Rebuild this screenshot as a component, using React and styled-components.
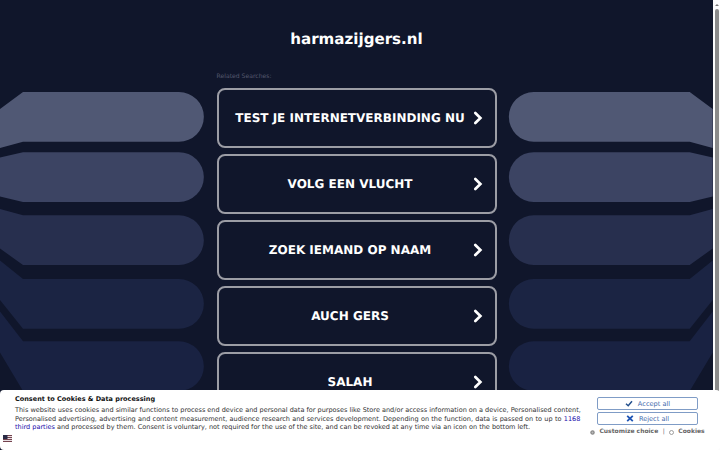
import React from "react";
import styled, { createGlobalStyle } from "styled-components";

const GlobalStyle = createGlobalStyle`
  html, body { margin: 0; height: 100%; overflow: hidden; background: #10162b; }
  * { box-sizing: border-box; }
`;

const Page = styled.div`
  position: relative;
  display: flex;
  width: 720px;
  height: 450px;
  overflow: hidden;
  background: #10162b;
  font-family: "DejaVu Sans", sans-serif;
  text-rendering: geometricPrecision;
`;

const Backdrop = styled.svg`
  position: absolute;
  inset: 0;
  width: 713px;
  height: 450px;
`;

const Content = styled.main`
  position: relative;
  width: 713px;
  height: 450px;
  display: flex;
  flex-direction: column;
  align-items: center;
  padding-top: 28px;
`;

const Title = styled.h1`
  margin: 0;
  height: 22px;
  line-height: 22px;
  font-size: 15.1px;
  font-weight: 700;
  color: #fff;
  white-space: nowrap;
`;

const Related = styled.section`
  width: 280px;
  margin-top: 21px;
  display: flex;
  flex-direction: column;
  gap: 6px;
`;

const RelatedLabel = styled.div`
  height: 11px;
  line-height: 11px;
  font-size: 6.1px;
  color: #55586e;
`;

const LinkCard = styled.a`
  display: flex;
  align-items: center;
  height: 60px;
  flex: none;
  padding: 0 12px 0 9px;
  border: 2px solid #9c9da5;
  border-radius: 8px;
  color: #fff;
`;

const LinkText = styled.span`
  flex: 1;
  text-align: center;
  font-size: 12px;
  font-weight: 700;
  line-height: 16px;
  white-space: nowrap;
`;

const Chevron = styled.svg`
  width: 10px;
  height: 14px;
  flex: none;
`;

const Scrollbar = styled.div`
  width: 7px;
  height: 450px;
  display: flex;
  flex-direction: column;
  align-items: center;
  background: #fcfcfc;
  position: relative;
`;

const ScrollArrow = styled.svg`
  width: 4px;
  height: 2px;
  margin: 4px 0 3px;
  flex: none;
`;

const ScrollThumb = styled.div`
  width: 4px;
  height: 384px;
  border-radius: 2px;
  background: #8b8b8b;
`;

const Banner = styled.aside`
  position: absolute;
  left: 0;
  bottom: 0;
  width: 720px;
  height: 60px;
  display: flex;
  background: #fff;
  border-radius: 4px;
  color: #333;
`;

const BannerText = styled.div`
  width: 597px;
  padding: 5px 0 0 15px;
  white-space: nowrap;
`;

const BannerTitle = styled.h2`
  margin: 0 0 2px;
  height: 9px;
  font-size: 6.5px;
  line-height: 9px;
  color: #111;
`;

const BannerLine = styled.p`
  margin: 0;
  height: 8.6px;
  font-size: 6.52px;
  line-height: 8.6px;
  word-spacing: ${({ $spread }) => $spread || "0"};
`;

const PartnerLink = styled.a`
  color: #1a0dab;
`;

const Actions = styled.div`
  width: 101px;
  padding-top: 7px;
  display: flex;
  flex-direction: column;
  align-items: center;
  gap: 2px;
`;

const ActionButton = styled.button`
  display: flex;
  align-items: center;
  justify-content: center;
  gap: 5px;
  width: 101px;
  height: 13px;
  flex: none;
  padding: 0;
  border: 1px solid #7f9cc6;
  border-radius: 2px;
  background: #fff;
  color: #3f6bac;
  font: 6.6px/10px "DejaVu Sans", sans-serif;
  white-space: nowrap;
`;

const ActionIcon = styled.svg`
  width: 8px;
  height: 7px;
`;

const Options = styled.div`
  display: flex;
  align-items: center;
  height: 10px;
  font-size: 6px;
  font-weight: 700;
  line-height: 10px;
  color: #666;
  white-space: nowrap;
`;

const OptionIcon = styled.svg`
  width: 5px;
  height: 5px;
  margin-right: 4px;
`;

const Divider = styled.span`
  margin: 0 4.5px;
  font-weight: 400;
`;

const Flag = styled.svg`
  position: absolute;
  left: 3px;
  top: 45px;
  width: 9px;
  height: 7px;
`;

const searches = [
  "TEST JE INTERNETVERBINDING NU",
  "VOLG EEN VLUCHT",
  "ZOEK IEMAND OP NAAM",
  "AUCH GERS",
  "SALAH",
];

const bands = [
  { top: 92, edgeTop: 109, edgeBottom: 148, fill: "#505874" },
  { top: 152.2, edgeTop: 157.5, edgeBottom: 196.5, fill: "#3c4463" },
  { top: 215.3, edgeTop: 209, edgeBottom: 248.5, fill: "#272f4e" },
  { top: 279, edgeTop: 260.5, edgeBottom: 300, fill: "#1b2443" },
  { top: 341.3, edgeTop: 311.5, edgeBottom: 352.5, fill: "#192242" },
];

function Bands() {
  return bands.map(({ top, edgeTop, edgeBottom, fill }) => (
    <path
      key={top}
      fill={fill}
      d={`M0 ${edgeTop}L23 ${top}H179a24.8 24.8 0 0 1 0 49.7H23L0 ${edgeBottom}Z`}
    />
  ));
}

export default function App() {
  return (
    <Page>
      <GlobalStyle />
      <Backdrop viewBox="0 0 713 450">
        <Bands />
        <g transform="translate(712.7 0) scale(-1 1)">
          <Bands />
        </g>
      </Backdrop>
      <Content>
        <Title>harmazijgers.nl</Title>
        <Related>
          <RelatedLabel>Related Searches:</RelatedLabel>
          {searches.map((label) => (
            <LinkCard key={label}>
              <LinkText>{label}</LinkText>
              <Chevron viewBox="0 0 10 14">
                <path d="M2.3 2 7.4 7 2.3 12" fill="none" stroke="#fff" strokeWidth="2.7" strokeLinecap="round" />
              </Chevron>
            </LinkCard>
          ))}
        </Related>
      </Content>
      <Scrollbar>
        <ScrollArrow viewBox="0 0 4 2">
          <path d="M0 2 2 0 4 2Z" fill="#777" />
        </ScrollArrow>
        <ScrollThumb />
      </Scrollbar>
      <Banner>
        <BannerText>
          <BannerTitle>Consent to Cookies &amp; Data processing</BannerTitle>
          <BannerLine>
            This website uses cookies and similar functions to process end device and personal data for purposes like Store and/or access information on a device, Personalised content,
          </BannerLine>
          <BannerLine $spread="0.22px">
            Personalised advertising, advertising and content measurement, audience research and services development. Depending on the function, data is passed on to up to{" "}
            <PartnerLink>1168</PartnerLink>
          </BannerLine>
          <BannerLine>
            <PartnerLink>third parties</PartnerLink> and processed by them. Consent is voluntary, not required for the use of the site, and can be revoked at any time via an icon on the bottom left.
          </BannerLine>
        </BannerText>
        <Actions>
          <ActionButton>
            <ActionIcon viewBox="0 0 8 7">
              <path d="M1 3.8 3.2 5.7 7 1.3" fill="none" stroke="#234f8c" strokeWidth="1.5" />
            </ActionIcon>
            Accept all
          </ActionButton>
          <ActionButton>
            <ActionIcon viewBox="0 0 8 7">
              <path d="M1.2.8 6.8 6.2M6.8.8 1.2 6.2" stroke="#1f55b5" strokeWidth="1.8" />
            </ActionIcon>
            Reject all
          </ActionButton>
          <Options>
            <OptionIcon viewBox="0 0 5 5">
              <circle cx="2.5" cy="2.5" r="1.6" fill="#bbb" stroke="#888" strokeWidth="1.3" />
            </OptionIcon>
            Customize choice
            <Divider>|</Divider>
            <OptionIcon viewBox="0 0 5 5">
              <circle cx="2.5" cy="2.5" r="2" fill="none" stroke="#888" strokeWidth=".8" />
            </OptionIcon>
            Cookies
          </Options>
        </Actions>
        <Flag viewBox="0 0 9 7">
          <path fill="#e8dfe3" d="M0 0h9v7H0z" />
          <path stroke="#74434e" strokeWidth="1" d="M0 .5h9M0 2.5h9M0 4.5h9M0 6.5h9" />
          <path fill="#292b45" d="M0 0h4.5v4H0z" />
        </Flag>
      </Banner>
    </Page>
  );
}
